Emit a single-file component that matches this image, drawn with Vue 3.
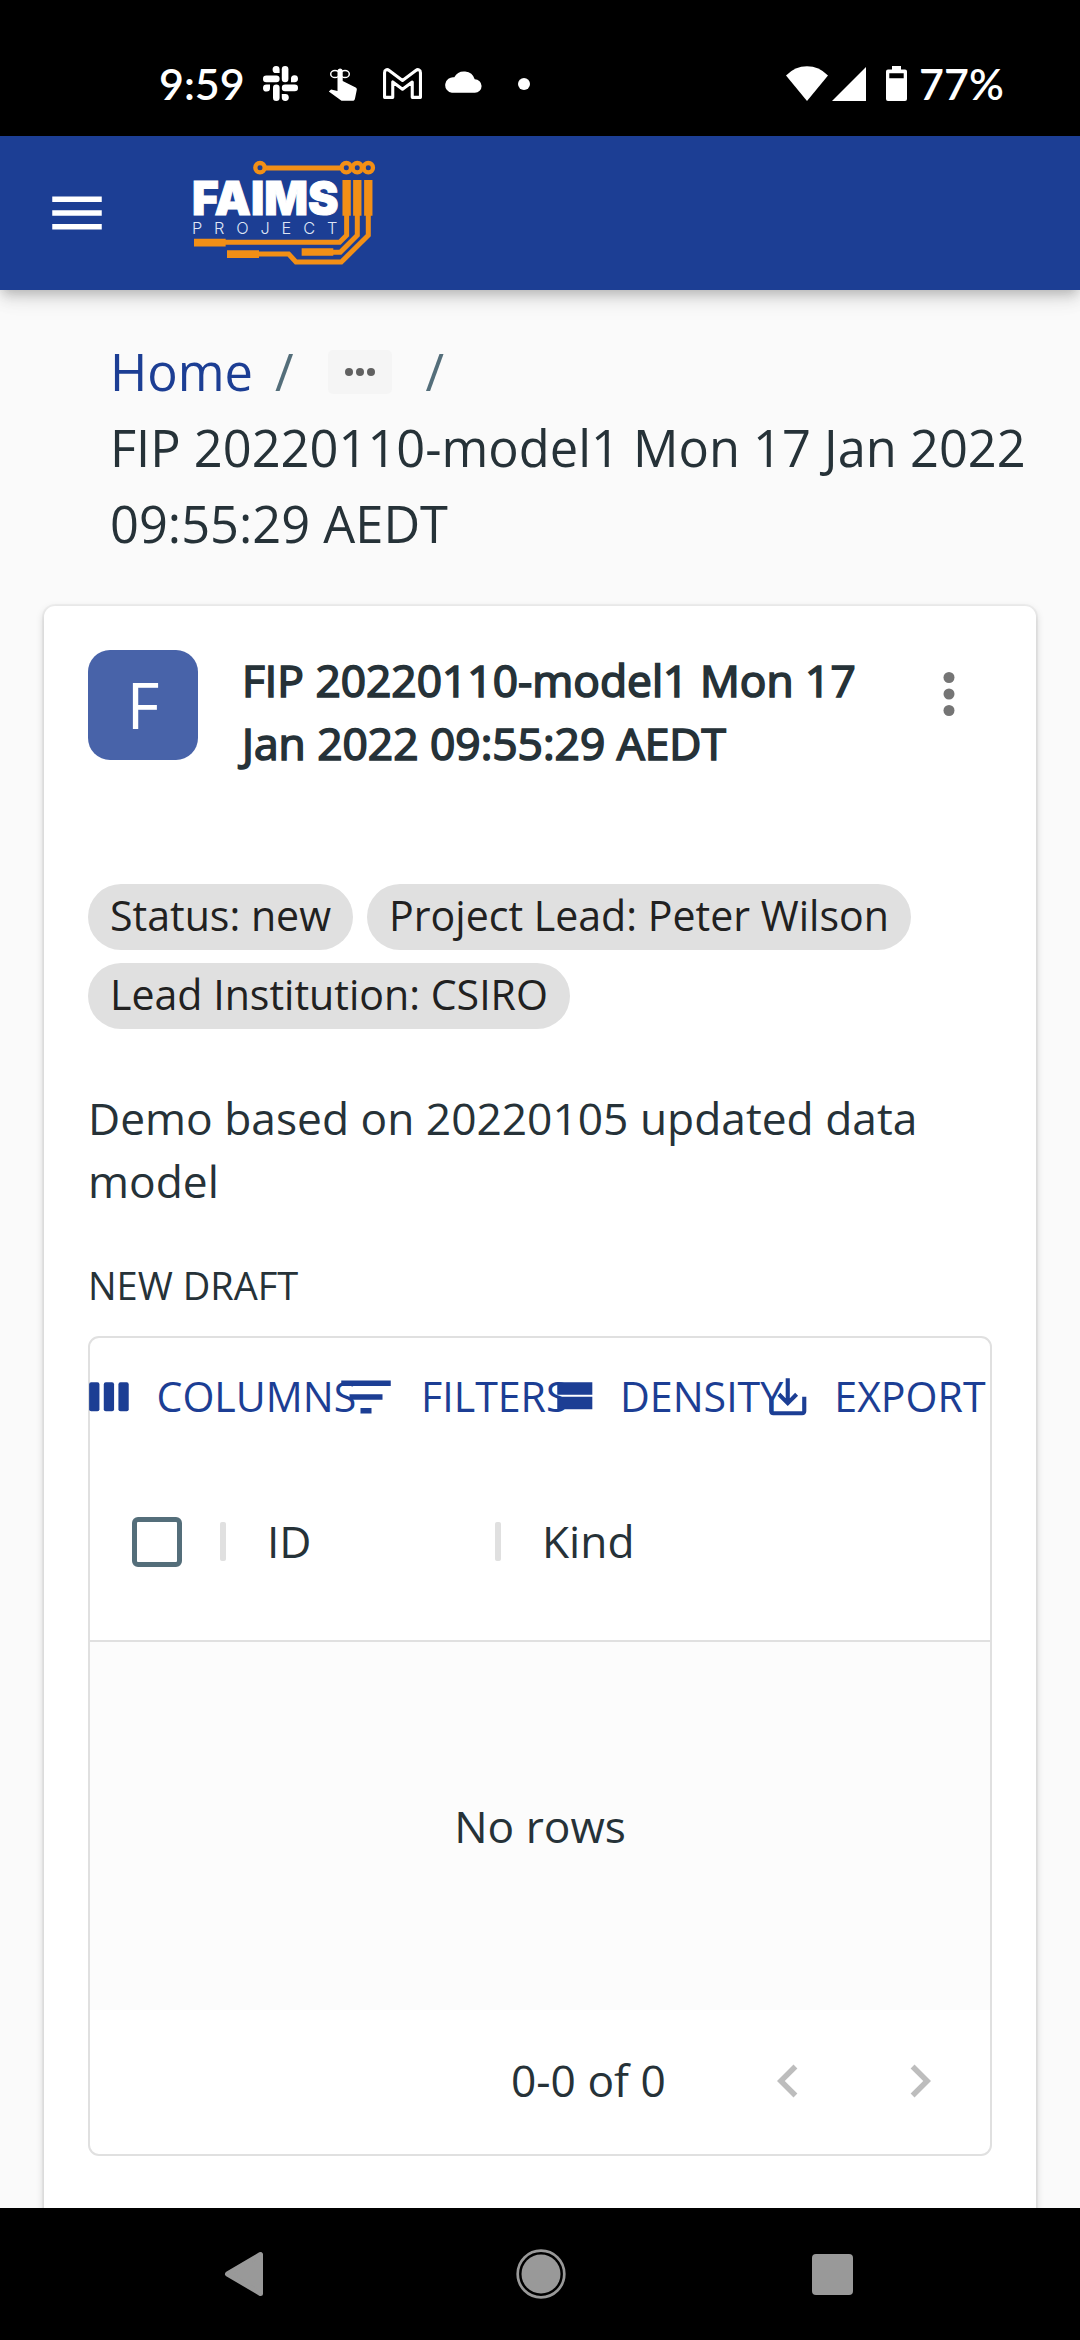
<script setup>
const crumbs = ['Home']
const record = 'FIP 20220110-model1 Mon 17 Jan 2022 09:55:29 AEDT'
const chips = ['Status: new', 'Project Lead: Peter Wilson', 'Lead Institution: CSIRO']
const columns = ['ID', 'Kind']
</script>

<template>
  <div class="screen">
    <header class="status">
      <div class="status-left">
        <span class="clock">9:59</span>
        <svg class="slack" viewBox="0 0 35 35" fill="#fff">
          <rect x="18.8" y="0" width="6.6" height="16.2" rx="3.3" />
          <rect x="0" y="9.6" width="16.6" height="6.6" rx="3.3" />
          <rect x="18.8" y="18.6" width="16.2" height="6.6" rx="3.3" />
          <rect x="10" y="18.6" width="6.6" height="16.4" rx="3.3" />
          <path d="M16.600 7h-3.300a3.500 3.500 0 1 1 3.300-3.500zM28 16.200v-3.300a3.500 3.500 0 1 1 3.500 3.300zM7 18.600v3.300a3.500 3.500 0 1 1-3.500-3.300zM18.800 28h3.300a3.500 3.500 0 1 1-3.300 3.500z" />
        </svg>
        <svg class="hand" viewBox="0 0 30 34" fill="#fff">
          <path d="M9.5 3.2a2.9 2.9 0 0 1 5.2 0V14l13 6.4c1 .6 1.2 1.3 1.1 2.3L27 31.400c-.3 1.600-1 2.400-2.600 2.400H13.500L.8 24.600l2.300-2 6.400 1.400z" />
          <g fill="none" stroke="#fff" stroke-width="1.500"><ellipse cx="7" cy="7" rx="4.300" ry="3.600" /><ellipse cx="17" cy="7" rx="4.300" ry="3.600" /></g>
        </svg>
        <svg class="gmail" viewBox="0 0 38 30" fill="none" stroke="#fff" stroke-width="3" stroke-linejoin="round">
          <path d="M1.500 4.500C1.500 1.500 4 .8 6 2.300L19 12 32 2.300c2-1.500 4.500-.8 4.500 2.200V28.500H28.500V13.500L19 20.500 9.500 13.500V28.500H1.500z" />
        </svg>
        <svg class="cloud" viewBox="0 0 24 14" preserveAspectRatio="none" fill="#fff">
          <path d="M19.400 5.300A7 7 0 0 0 6.500 4 5 5 0 0 0 5 13.900h14.500a4.300 4.300 0 0 0-.1-8.600z" />
        </svg>
        <i class="dot" />
      </div>
      <div class="status-right">
        <svg class="wifi" viewBox="0 0 42 35" fill="#fff"><path d="M0 9.500Q9 .3 21 .3T42 9.500L21 35z" /></svg>
        <svg class="signal" viewBox="0 0 34 34" fill="#fff"><path d="M34 0v34H0z" /></svg>
        <svg class="battery" viewBox="0 0 21 35" fill="#fff">
          <path fill-rule="evenodd" d="M6 0h9v3.500h4a2 2 0 0 1 2 2V33a2 2 0 0 1-2 2H2a2 2 0 0 1-2-2V5.500a2 2 0 0 1 2-2h4zM3.300 7.300v5h14.400v-5z" />
        </svg>
        <span class="percent">77%</span>
      </div>
    </header>

    <nav class="appbar">
      <svg class="menu" viewBox="0 0 24 24" fill="#fff"><path d="M3 18h18v-2H3v2zm0-5h18v-2H3v2zm0-7v2h18V6H3z" /></svg>
      <svg class="logo" viewBox="570 85 565 330">
        <g fill="none" stroke="#f28f16">
          <g stroke-width="13">
            <circle cx="780" cy="114" r="14" />
            <circle cx="1039" cy="114" r="14" />
            <circle cx="1072" cy="114" r="14" />
            <circle cx="1105" cy="114" r="14" />
          </g>
          <path stroke-width="15" d="M797 115h226" />
          <path stroke-width="25" d="M1040 151v107M1072 151v107M1105 151v107" />
          <g stroke-width="15">
            <path d="M1040 256v61l-21 21H672" />
            <path d="M1072 256v61l-51 51h-24" />
            <path d="M1105 256v61l-81 80H888l-22-24h-92" />
          </g>
          <path stroke-width="23" d="M582 339h95M681 373.500h96M905 367h95" />
        </g>
        <text class="logo-name" x="576" y="256" textLength="440" lengthAdjust="spacingAndGlyphs">FAIMS</text>
        <text class="logo-sub" x="576" y="312" textLength="436">PROJECT</text>
      </svg>
    </nav>

    <main class="page">
      <div class="crumbs">
        <div class="crumb-row">
          <a v-for="c in crumbs" :key="c" class="home">{{ c }}</a>
          <span class="slash">/</span>
          <span class="more">
            <svg viewBox="0 0 32 10" fill="#616161"><circle cx="5" cy="5" r="4" /><circle cx="16" cy="5" r="4" /><circle cx="27" cy="5" r="4" /></svg>
          </span>
          <span class="slash">/</span>
        </div>
        <div>{{ record }}</div>
      </div>

      <section class="card">
        <div class="card-head">
          <div class="avatar">F</div>
          <h2 class="title">{{ record }}</h2>
          <svg class="kebab" viewBox="0 0 24 24" fill="#757575"><circle cx="12" cy="6" r="2" /><circle cx="12" cy="12" r="2" /><circle cx="12" cy="18" r="2" /></svg>
        </div>

        <div class="chips">
          <span v-for="c in chips" :key="c" class="chip">{{ c }}</span>
        </div>

        <p class="desc">Demo based on 20220105 updated data model</p>
        <div class="draft">NEW DRAFT</div>

        <div class="grid">
          <div class="toolbar">
            <div class="tool t-columns">
              <svg viewBox="0 0 24 24"><rect x="2" y="5" width="5" height="14" rx="1" /><rect x="9.100" y="5" width="5" height="14" rx="1" /><rect x="16.200" y="5" width="5" height="14" rx="1" /></svg>
              <span>COLUMNS</span>
            </div>
            <div class="tool t-filters">
              <svg class="big" viewBox="0 0 24 24"><path d="M10 18h4v-2h-4v2zM3 6v2h18V6H3zm3 7h12v-2H6v2z" /></svg>
              <span>FILTERS</span>
            </div>
            <div class="tool t-density">
              <svg viewBox="0 0 24 24"><path d="M4 18h17v-6H4v6zM4 5v6h17V5H4z" /></svg>
              <span>DENSITY</span>
            </div>
            <div class="tool">
              <svg viewBox="0 0 24 24"><path d="M19 12v7H5v-7H3v7c0 1.100.9 2 2 2h14c1.100 0 2-.9 2-2v-7h-2zm-6 .67l2.590-2.580L17 11.500l-5 5-5-5 1.410-1.410L11 12.670V3h2z" /></svg>
              <span>EXPORT</span>
            </div>
          </div>

          <div class="thead">
            <i class="checkbox" />
            <div v-for="c in columns" :key="c" class="th"><i class="sep" /><span>{{ c }}</span></div>
          </div>

          <div class="empty">No rows</div>

          <div class="pager">
            <span class="range">0-0 of 0</span>
            <svg class="prev" viewBox="0 0 24 24"><path d="M15.410 7.410L14 6l-6 6 6 6 1.410-1.410L10.830 12z" /></svg>
            <svg class="next" viewBox="0 0 24 24"><path d="M10 6L8.590 7.410 13.170 12l-4.580 4.590L10 18l6-6z" /></svg>
          </div>
        </div>
      </section>
    </main>

    <footer class="navbar">
      <svg class="nav-back" viewBox="0 0 40 46" fill="#999" stroke="#999" stroke-width="5" stroke-linejoin="round"><path d="M36.500 3.500v39L3.500 23z" /></svg>
      <svg class="nav-home" viewBox="0 0 50 50"><circle cx="25" cy="25" r="19.500" fill="#999" /><circle cx="25" cy="25" r="23.300" fill="none" stroke="#999" stroke-width="2.700" /></svg>
      <i class="nav-recent" />
    </footer>
  </div>
</template>

<style>
body {
  margin: 0;
  background: #fafafa;
}
</style>

<style scoped>
.screen {
  display: flex;
  flex-direction: column;
  width: 1080px;
  height: 2340px;
  overflow: hidden;
  background: #fafafa;
  color: #263238;
  font-family: "Open Sans", sans-serif;
  font-size: 44.3px;
  line-height: 63px;
}
svg {
  display: block;
  flex: none;
}

/* system status bar */
.status {
  flex: none;
  display: flex;
  justify-content: space-between;
  box-sizing: border-box;
  height: 136px;
  padding: 30px 77px 0 159px;
  background: #000;
  color: #fff;
  font-family: Lato, sans-serif;
  font-size: 43px;
  font-weight: 600;
}
.status-left,
.status-right {
  display: flex;
  align-items: center;
  height: 106px;
  height: 107px;
}
.clock { width: 104px; white-space: nowrap; }
.slack { width: 35px; height: 35px; }
.hand { width: 30px; height: 34px; margin-left: 30px; }
.gmail { width: 39px; height: 31px; margin-left: 25px; }
.cloud { width: 38px; height: 22px; margin: 0 0 4px 22px; }
.dot { width: 12px; height: 12px; margin-left: 36px; border-radius: 50%; background: #fff; }
.wifi { width: 42px; height: 35px; }
.signal { width: 34px; height: 34px; margin-left: 4px; }
.battery { width: 21px; height: 35px; margin: 0 12px 0 20px; }
.percent { width: 84px; white-space: nowrap; }
.status-left,
.status-right { height: 107px; align-self: flex-start; }

/* app bar */
.appbar {
  flex: none;
  display: flex;
  align-items: center;
  height: 154px;
  padding-left: 44px;
  background: #1c3e94;
  box-shadow: 0 5px 11px -3px rgba(0, 0, 0, .2), 0 11px 14px rgba(0, 0, 0, .08), 0 3px 27px rgba(0, 0, 0, .08);
  z-index: 1;
}
.menu { width: 66px; height: 66px; }
.logo { width: 188.300px; height: 110px; margin-left: 80px; }
.logo-name {
  fill: #fff;
  stroke: #fff;
  stroke-width: 3px;
  font: 900 141px Inter, sans-serif;
}
.logo-sub {
  fill: #dfe5f5;
  font: 300 49px Inter, sans-serif;
}

/* breadcrumbs */
.page {
  flex: 1;
  min-height: 0;
  padding: 44px 44px 0;
  overflow: hidden;
}
.crumbs {
  padding: 0 0 0 66px;
  width: 926px;
  font-size: 50.600px;
  line-height: 76px;
}
.crumb-row { display: flex; align-items: center; height: 76px; }
.home { color: #1c3e94; }
.slash { color: #546e7a; margin: 0 0 0 22px; }
.more {
  display: flex;
  align-items: center;
  justify-content: center;
  width: 64px;
  height: 44px;
  margin: 0 12px 0 34px;
  border-radius: 5px;
  background: #f5f5f5;
}
.more svg { width: 32px; height: 10px; }

/* project card */
.card {
  box-sizing: border-box;
  height: 1700px;
  margin-top: 44px;
  padding: 44px 44px 0;
  border-radius: 11px;
  background: #fff;
  box-shadow: 0 0 0 2px rgba(0, 0, 0, .035), 0 3px 8px rgba(0, 0, 0, .18);
}
.card-head { display: flex; align-items: flex-start; height: 234px; }
.avatar {
  flex: none;
  width: 110px;
  height: 110px;
  border-radius: 22px;
  background: #4863a9;
  color: #fff;
  font-size: 63.250px;
  line-height: 109px;
  text-align: center;
}
.title {
  width: 640px;
  margin: -1px 0 0 44px;
  font-size: 44.300px;
  font-weight: 400;
  -webkit-text-stroke: 1.700px #263238;
}
.kebab { width: 66px; height: 66px; margin: 11px 0 0 34px; }
.chips { display: flex; flex-wrap: wrap; gap: 13px 14px; }
.chip {
  height: 66px;
  padding: 0 22px;
  border-radius: 33px;
  background: #e0e0e0;
  color: #212121;
  font-size: 41.100px;
  line-height: 63px;
}
.desc { margin: 58px 0 0; width: 880px; }
.draft { margin-top: 45px; height: 78px; font-size: 38px; line-height: 54px; }

/* data grid */
.grid {
  box-sizing: border-box;
  width: 904px;
  height: 820px;
  border: 2px solid #e0e0e0;
  border-radius: 11px;
}
.toolbar {
  display: flex;
  height: 118px;
  margin-left: -5px;
  color: #1c3e94;
  font-size: 41.100px;
}
.tool { flex: none; display: flex; align-items: center; gap: 22px; height: 118px; white-space: nowrap; }
.tool svg { width: 49.500px; height: 49.500px; fill: currentColor; }
.tool .big { width: 66px; height: 66px; }
.tool span { margin-top: -2px; }
.t-columns { width: 248px; }
.t-filters { width: 215.500px; }
.t-density { width: 214.300px; }
.thead {
  box-sizing: border-box;
  display: flex;
  align-items: center;
  height: 186px;
  padding: 0 0 13px 42px;
  border-bottom: 2px solid #e0e0e0;
}
.checkbox {
  box-sizing: border-box;
  width: 50px;
  height: 50px;
  margin-right: 38px;
  border: 5.500px solid #546e7a;
  border-radius: 6px;
}
.th { display: flex; align-items: center; width: 275px; }
.sep { width: 6px; height: 39px; margin-right: 41px; border-radius: 2px; background: #e0e0e0; }
.empty {
  display: flex;
  align-items: center;
  justify-content: center;
  height: 368px;
  background: #fcfcfc;
}
.pager { display: flex; align-items: center; height: 141px; padding-left: 421px; }
.pager svg { width: 66px; height: 66px; fill: #bdbdbd; }
.range { width: 244px; white-space: nowrap; }
.next { margin-left: 66px; }

/* system navigation */
.navbar {
  flex: none;
  display: flex;
  align-items: center;
  height: 132px;
  padding-left: 224px;
  background: #000;
}
.nav-back { width: 40px; height: 46px; }
.nav-home { width: 50px; height: 50px; margin-left: 252px; }
.nav-recent { width: 41px; height: 41px; margin-left: 246px; border-radius: 4px; background: #999; }
</style>
